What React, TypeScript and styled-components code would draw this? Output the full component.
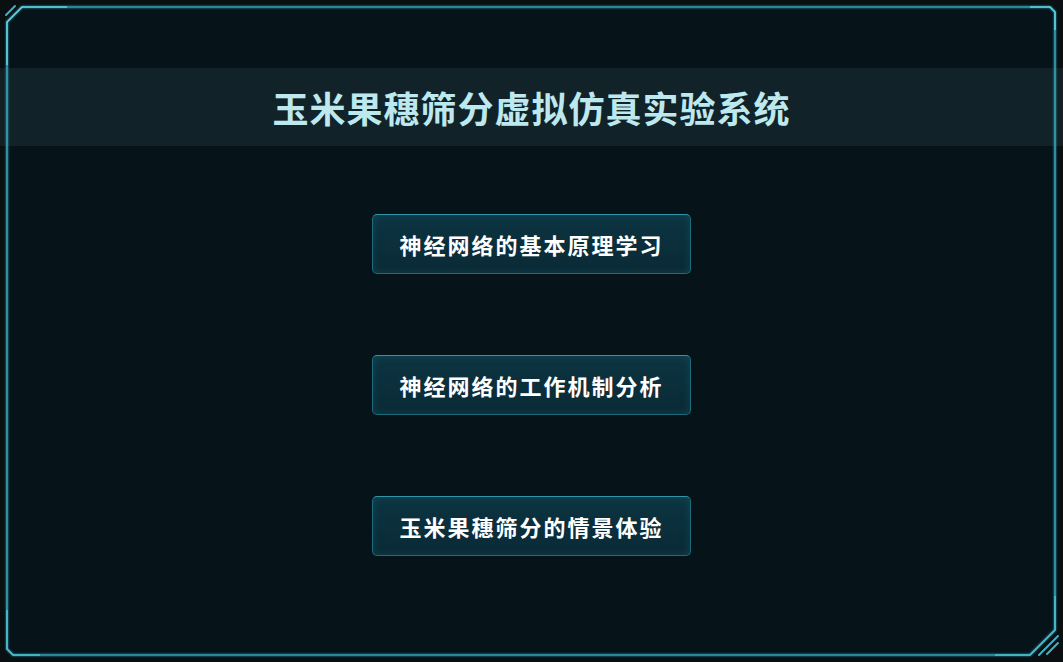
import styled, { createGlobalStyle } from 'styled-components';

const GlobalStyle = createGlobalStyle`
  html, body {
    margin: 0;
    padding: 0;
    background: #0a0f11;
    overflow: hidden;
  }
  * {
    box-sizing: border-box;
  }
`;

const Screen = styled.div`
  position: relative;
  width: 100vw;
  height: 100vh;
  background: #0a0f11;
  font-family: 'Noto Sans CJK SC', 'Noto Sans', sans-serif;
  overflow: hidden;
`;

const PanelFill = styled.div`
  position: absolute;
  inset: 0;
  background: #061419;
  clip-path: polygon(7px 22px, 22px 7px, 1050px 7px, 1055px 12px, 1055px 630px, 1030px 655px, 13px 655px, 7px 649px);
`;

const FrameArt = styled.svg`
  position: absolute;
  inset: 0;
  width: 100%;
  height: 100%;
  pointer-events: none;
`;

const Content = styled.div`
  position: relative;
  display: flex;
  flex-direction: column;
  align-items: center;
  padding-top: 68px;
`;

const TitleBar = styled.header`
  width: 100%;
  height: 78px;
  display: flex;
  align-items: center;
  justify-content: center;
  background: rgba(38, 58, 68, 0.38);
`;

const Title = styled.h1`
  margin: 0;
  font-size: 36px;
  font-weight: 700;
  color: #bde8ee;
  letter-spacing: 1px;
`;

const MenuList = styled.nav`
  display: flex;
  flex-direction: column;
  align-items: center;
  gap: 81px;
  margin-top: 68px;
`;

const MenuButton = styled.button`
  width: 319px;
  height: 60px;
  display: flex;
  align-items: center;
  justify-content: center;
  padding: 0;
  border: 1px solid #1d6b7c;
  border-top-color: #3294a6;
  border-radius: 5px;
  background: linear-gradient(180deg, #0c3441 0%, #0a2a36 100%);
  box-shadow: inset 0 0 8px rgba(40, 150, 170, 0.22);
  color: #ffffff;
  font-family: inherit;
  font-size: 22px;
  font-weight: 700;
  letter-spacing: 2px;
  cursor: pointer;
`;

const menuItems = [
  '神经网络的基本原理学习',
  '神经网络的工作机制分析',
  '玉米果穗筛分的情景体验',
];

const outline = 'M7 22 L22 7 L1050 7 L1055 12 L1055 630 L1030 655 L13 655 L7 649 Z';

function Frame() {
  return (
    <FrameArt viewBox="0 0 1063 662" preserveAspectRatio="none">
      <defs>
        <filter id="glow" x="-5%" y="-5%" width="110%" height="110%">
          <feGaussianBlur stdDeviation="0.8" />
        </filter>
      </defs>
      <path d={outline} fill="none" stroke="#2a8ea3" strokeWidth="2" filter="url(#glow)" />
      <path d={outline} fill="none" stroke="#3fb2c6" strokeWidth="1.2" />
      {/* brighter accents */}
      <path d="M7 65 L7 22 L22 7 L67 7" fill="none" stroke="#5fd0e0" strokeWidth="1.6" />
      <path d="M1030 7 L1050 7 L1055 12 L1055 30" fill="none" stroke="#5fd0e0" strokeWidth="1.6" />
      <path d="M1055 596 L1055 630 L1030 655 L995 655" fill="none" stroke="#4cc0d3" strokeWidth="1.6" />
      <path d="M7 610 L7 649 L13 655 L40 655" fill="none" stroke="#4cc0d3" strokeWidth="1.6" />
      {/* corner stripes */}
      <path d="M6 15 L15 6" stroke="#3fb2c6" strokeWidth="2" strokeLinecap="round" />
      <path d="M1058 636 L1039 655" stroke="#3fb2c6" strokeWidth="2" strokeLinecap="round" />
      <path d="M1058 643 L1047 654" stroke="#3fb2c6" strokeWidth="2" strokeLinecap="round" />
    </FrameArt>
  );
}

export default function App() {
  return (
    <>
      <GlobalStyle />
      <Screen>
        <PanelFill />
        <Content>
          <TitleBar>
            <Title>玉米果穗筛分虚拟仿真实验系统</Title>
          </TitleBar>
          <MenuList>
            {menuItems.map((label) => (
              <MenuButton key={label}>{label}</MenuButton>
            ))}
          </MenuList>
        </Content>
        <Frame />
      </Screen>
    </>
  );
}
